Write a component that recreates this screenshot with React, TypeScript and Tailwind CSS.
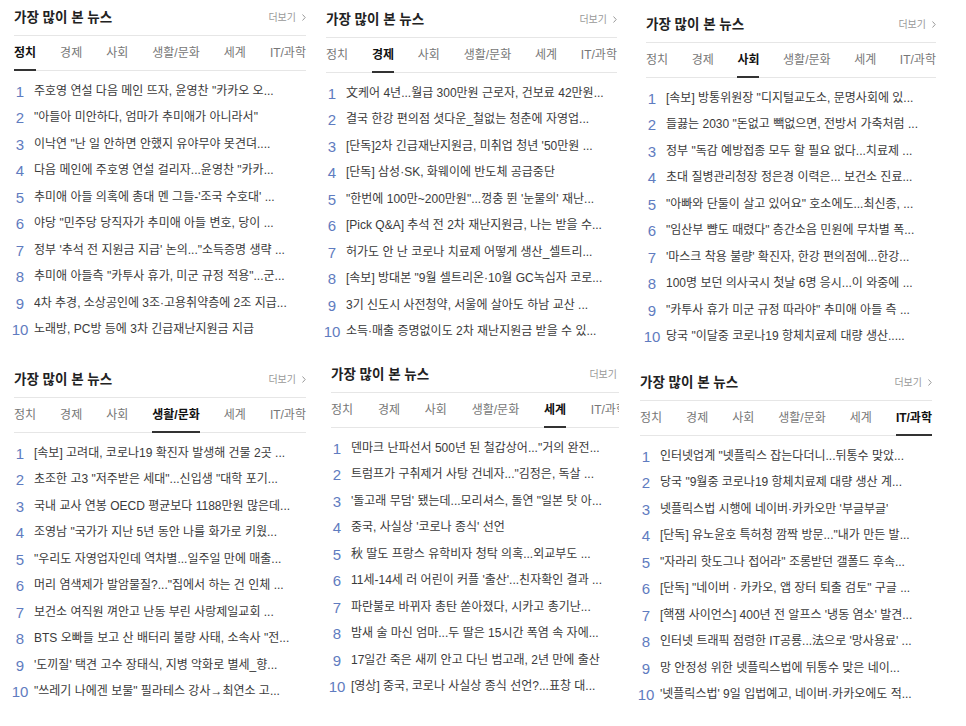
import React from "react";
import clsx from "clsx";

const TABS = ["정치", "경제", "사회", "생활/문화", "세계", "IT/과학"];

const politics = [
  '주호영 연설 다음 메인 뜨자, 윤영찬 "카카오 오...',
  '"아들아 미안하다, 엄마가 추미애가 아니라서"',
  '이낙연 "난 일 안하면 안했지 유야무야 못견뎌....',
  '다음 메인에 주호영 연설 걸리자...윤영찬 "카카...',
  "추미애 아들 의혹에 총대 멘 그들-'조국 수호대' ...",
  '야당 "민주당 당직자가 추미애 아들 변호, 당이 ...',
  "정부 '추석 전 지원금 지급' 논의...\"소득증명 생략 ...",
  '추미애 아들측 "카투사 휴가, 미군 규정 적용"...군...',
  "4차 추경, 소상공인에 3조·고용취약층에 2조 지급...",
  "노래방, PC방 등에 3차 긴급재난지원금 지급",
];

const economy = [
  "文케어 4년...월급 300만원 근로자, 건보료 42만원...",
  "결국 한강 편의점 셧다운_철없는 청춘에 자영업...",
  "[단독]2차 긴급재난지원금, 미취업 청년 '50만원 ...",
  "[단독] 삼성·SK, 화웨이에 반도체 공급중단",
  "\"한번에 100만~200만원\"...껑충 뛴 '눈물의' 재난...",
  "[Pick Q&A] 추석 전 2차 재난지원금, 나는 받을 수...",
  "허가도 안 난 코로나 치료제 어떻게 생산_셀트리...",
  '[속보] 방대본 "9월 셀트리온·10월 GC녹십자 코로...',
  "3기 신도시 사전청약, 서울에 살아도 하남 교산 ...",
  "소득·매출 증명없이도 2차 재난지원금 받을 수 있...",
];

const society = [
  '[속보] 방통위원장 "디지털교도소, 문명사회에 있...',
  '들끓는 2030 "돈없고 빽없으면, 전방서 가축처럼 ...',
  '정부 "독감 예방접종 모두 할 필요 없다...치료제 ...',
  "초대 질병관리청장 정은경 이력은... 보건소 진료...",
  '"아빠와 단둘이 살고 있어요" 호소에도...최신종, ...',
  '"임산부 뺨도 때렸다" 층간소음 민원에 무차별 폭...',
  "'마스크 착용 불량' 확진자, 한강 편의점에...한강...",
  "100명 보던 의사국시 첫날 6명 응시...이 와중에 ...",
  '"카투사 휴가 미군 규정 따라야" 추미애 아들 측 ...',
  '당국 "이달중 코로나19 항체치료제 대량 생산.....',
];

const culture = [
  "[속보] 고려대, 코로나19 확진자 발생해 건물 2곳 ...",
  '초조한 고3 "저주받은 세대"...신입생 "대학 포기...',
  "국내 교사 연봉 OECD 평균보다 1188만원 많은데...",
  '조영남 "국가가 지난 5년 동안 나를 화가로 키웠...',
  '"우리도 자영업자인데 역차별...일주일 만에 매출...',
  '머리 염색제가 발암물질?..."집에서 하는 건 인체 ...',
  "보건소 여직원 껴안고 난동 부린 사랑제일교회 ...",
  'BTS 오빠들 보고 산 배터리 불량 사태, 소속사 "전...',
  "'도끼질' 택견 고수 장태식, 지병 악화로 별세_향...",
  '"쓰레기 나에겐 보물" 필라테스 강사→최연소 고...',
];

const world = [
  '덴마크 난파선서 500년 된 철갑상어..."거의 완전...',
  '트럼프가 구취제거 사탕 건네자..."김정은, 독살 ...',
  "'돌고래 무덤' 됐는데...모리셔스, 돌연 \"일본 탓 아...",
  "중국, 사실상 '코로나 종식' 선언",
  "秋 딸도 프랑스 유학비자 청탁 의혹...외교부도 ...",
  "11세-14세 러 어린이 커플 '출산'...친자확인 결과 ...",
  "파란불로 바뀌자 총탄 쏟아졌다, 시카고 총기난...",
  "밤새 술 마신 엄마...두 딸은 15시간 폭염 속 자에...",
  "17일간 죽은 새끼 안고 다닌 범고래, 2년 만에 출산",
  "[영상] 중국, 코로나 사실상 종식 선언?...표창 대...",
];

const itScience = [
  '인터넷업계 "넷플릭스 잡는다더니...뒤통수 맞았...',
  '당국 "9월중 코로나19 항체치료제 대량 생산 계...',
  "넷플릭스법 시행에 네이버·카카오만 '부글부글'",
  '[단독] 유노윤호 특허청 깜짝 방문..."내가 만든 발...',
  '"자라리 핫도그나 접어라" 조롱받던 갤폴드 후속...',
  '[단독] "네이버 · 카카오, 앱 장터 퇴출 검토" 구글 ...',
  "[핵잼 사이언스] 400년 전 알프스 '냉동 염소' 발견...",
  "인터넷 트래픽 점령한 IT공룡...法으로 '망사용료' ...",
  "망 안정성 위한 넷플릭스법에 뒤통수 맞은 네이...",
  "'넷플릭스법' 9일 입법예고, 네이버·카카오에도 적...",
];

function RankingBox({
  active,
  items,
  className,
}: {
  active: number;
  items: string[];
  className?: string;
}) {
  return (
    <section className={className}>
      <div className="flex h-[36px] items-center justify-between border-b border-[#e6e6e6]">
        <h2 className="text-[13.5px] font-bold leading-none text-[#222]">가장 많이 본 뉴스</h2>
        <a className="flex items-center gap-[6px] text-[10px] leading-none text-[#999]">
          더보기
          <svg width="4" height="7" viewBox="0 0 4 7" fill="none">
            <path d="M0.5 0.5L3.2 3.5L0.5 6.5" stroke="#999" strokeWidth="1" />
          </svg>
        </a>
      </div>

      <div className="flex h-[35px] justify-between border-b border-[#e6e6e6]">
        {TABS.map((tab, i) => (
          <span
            key={tab}
            className={clsx(
              "flex h-[35px] items-center border-b-2 text-[12px] leading-none",
              i === active ? "border-[#333] font-bold text-[#111]" : "border-transparent text-[#777]"
            )}
          >
            {tab}
          </span>
        ))}
      </div>

      <ol className="ml-[-4px] pt-[7px]">
        {items.map((title, i) => (
          <li key={i} className="flex h-[26.5px] items-center">
            <span className="w-[20px] shrink-0 text-center font-['Liberation_Sans',sans-serif] text-[15px] leading-none text-[#5f7cc0]">
              {i + 1}
            </span>
            <span className="ml-[4px] truncate text-[12px] leading-[17px] text-[#3a3a3a]">{title}</span>
          </li>
        ))}
      </ol>
    </section>
  );
}

export default function App() {
  return (
    <div className="h-[726px] w-[966px] overflow-hidden bg-white font-['Liberation_Sans','Noto_Sans_CJK_KR',sans-serif]">
      <div className="flex h-[356px] items-start">
        <RankingBox active={0} items={politics} className="ml-[14px] w-[292px]" />
        <RankingBox active={1} items={economy} className="ml-[20px] mt-[2px] w-[291px]" />
        <RankingBox active={2} items={society} className="ml-[29px] mt-[7px] w-[290px]" />
      </div>
      <div className="flex items-start">
        <RankingBox active={3} items={culture} className="ml-[14px] mt-[6px] w-[292px]" />
        {/* this box runs past its column, so its right end is cut off */}
        <div className="ml-[20px] mt-[1px] w-[293px] overflow-hidden pl-[5px]">
          <RankingBox active={4} items={world} className="w-[296px]" />
        </div>
        <RankingBox active={5} items={itScience} className="ml-[21px] mt-[9px] w-[292px]" />
      </div>
    </div>
  );
}
